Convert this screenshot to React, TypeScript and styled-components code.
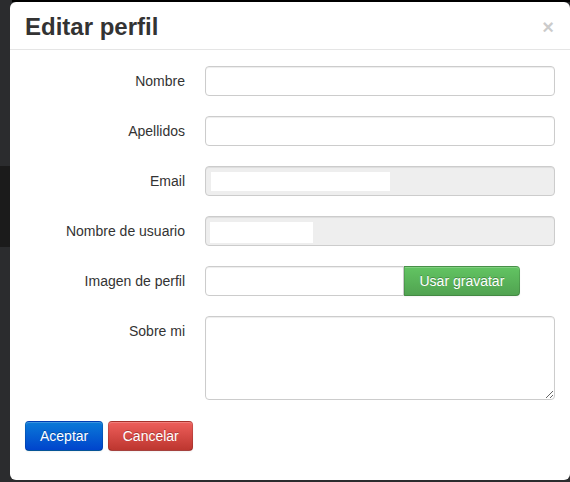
import React from "react";
import styled, { createGlobalStyle } from "styled-components";

const GlobalStyle = createGlobalStyle`
  html, body {
    margin: 0;
    padding: 0;
    width: 570px;
    height: 482px;
    overflow: hidden;
    background: linear-gradient(to bottom, #2b2c2e 0, #2b2c2e 166px, #1b1b1b 166px, #1b1b1b 247px, #2b2c2e 247px);
    font-family: "Liberation Sans", Arial, Helvetica, sans-serif;
  }
  * { box-sizing: border-box; }
`;

const Page = styled.div`
  padding: 2px 0 0 10px;
  position: relative;
  &::before {
    content: "";
    position: absolute;
    top: 0;
    left: 12px;
    right: 0;
    height: 2px;
    background: #000;
  }
`;

const Modal = styled.div`
  width: 560px;
  height: 478px;
  background: #fff;
  border-radius: 6px;
  display: flex;
  flex-direction: column;
  overflow: hidden;
`;

const Header = styled.div`
  display: flex;
  justify-content: space-between;
  align-items: flex-start;
  padding: 10px 15px 7px;
  border-bottom: 1px solid #e5e5e5;
`;

const Title = styled.h3`
  margin: 0;
  font-size: 24px;
  line-height: 30px;
  font-weight: bold;
  color: #333;
`;

const Close = styled.span`
  font-size: 20px;
  font-weight: bold;
  line-height: 20px;
  color: #000;
  opacity: 0.2;
  margin-top: 5px;
  margin-right: 1px;
`;

const Body = styled.div`
  padding: 16px 15px 0;
`;

const Form = styled.div`
  display: grid;
  grid-template-columns: 160px 350px;
  column-gap: 20px;
  row-gap: 20px;
`;

const Label = styled.label`
  text-align: right;
  font-size: 14px;
  line-height: 20px;
  padding-top: 5px;
  color: #333;
`;

const Input = styled.input<{ $joined?: boolean }>`
  display: block;
  width: ${(p) => (p.$joined ? "199px" : "350px")};
  height: 30px;
  padding: 4px 6px;
  font-size: 14px;
  font-family: inherit;
  color: #555;
  background: #fff;
  border: 1px solid #ccc;
  border-radius: ${(p) => (p.$joined ? "4px 0 0 4px" : "4px")};
  box-shadow: inset 0 1px 1px rgba(0, 0, 0, 0.075);
  outline: none;
`;

const DisabledField = styled.div<{ $top: number; $left: number }>`
  width: 350px;
  height: 30px;
  padding: ${(p) => `${p.$top - 1}px 0 0 ${p.$left - 1}px`};
  background: #eee;
  border: 1px solid #ccc;
  border-radius: 4px;
  box-shadow: inset 0 1px 1px rgba(0, 0, 0, 0.075);
`;

const Redacted = styled.div<{ $w: number; $h: number }>`
  width: ${(p) => p.$w}px;
  height: ${(p) => p.$h}px;
  background: #fff;
`;

const InputGroup = styled.div`
  display: flex;
`;

const Btn = styled.button<{ $variant: "primary" | "danger" | "success"; $joined?: boolean; $px?: number }>`
  height: 30px;
  padding: 0 ${(p) => p.$px ?? 14.5}px;
  font-size: 14px;
  font-family: inherit;
  line-height: 20px;
  color: #fff;
  text-shadow: 0 -1px 0 rgba(0, 0, 0, 0.25);
  border: 1px solid rgba(0, 0, 0, 0.12);
  border-bottom-color: rgba(0, 0, 0, 0.3);
  border-radius: ${(p) => (p.$joined ? "0 4px 4px 0" : "4px")};
  box-shadow: inset 0 1px 0 rgba(255, 255, 255, 0.2), 0 1px 2px rgba(0, 0, 0, 0.05);
  cursor: pointer;
  background: ${(p) =>
    p.$variant === "primary"
      ? "linear-gradient(to bottom, #0a7ad8, #0044cc)"
      : p.$variant === "danger"
      ? "linear-gradient(to bottom, #ee5f5b, #bd362f)"
      : "linear-gradient(to bottom, #62c462, #51a351)"};
`;

const TextArea = styled.textarea`
  display: block;
  width: 350px;
  height: 84px;
  padding: 4px 6px;
  font-size: 14px;
  font-family: inherit;
  border: 1px solid #ccc;
  border-radius: 4px;
  box-shadow: inset 0 1px 1px rgba(0, 0, 0, 0.075);
  outline: none;
`;

const Actions = styled.div`
  display: flex;
  gap: 5px;
  margin-top: 21px;
`;

export default function App() {
  return (
    <>
      <GlobalStyle />
      <Page>
        <Modal>
          <Header>
            <Title>Editar perfil</Title>
            <Close>×</Close>
          </Header>
          <Body>
            <Form>
              <Label>Nombre</Label>
              <Input type="text" />
              <Label>Apellidos</Label>
              <Input type="text" />
              <Label>Email</Label>
              <DisabledField $top={6} $left={6}>
                <Redacted $w={179} $h={19} />
              </DisabledField>
              <Label>Nombre de usuario</Label>
              <DisabledField $top={6} $left={5}>
                <Redacted $w={103} $h={21} />
              </DisabledField>
              <Label>Imagen de perfil</Label>
              <InputGroup>
                <Input type="text" $joined />
                <Btn $variant="success" $joined>
                  Usar gravatar
                </Btn>
              </InputGroup>
              <Label>Sobre mi</Label>
              <TextArea />
            </Form>
            <Actions>
              <Btn $variant="primary" $px={14}>
                Aceptar
              </Btn>
              <Btn $variant="danger" $px={13.5}>
                Cancelar
              </Btn>
            </Actions>
          </Body>
        </Modal>
      </Page>
    </>
  );
}
